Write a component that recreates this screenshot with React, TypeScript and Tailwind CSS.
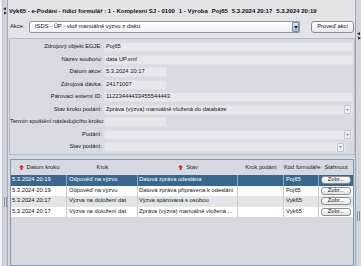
import React from "react";

type Field = {
  label: string;
  value: string;
  kind: "wide" | "narrow" | "combo" | "comboShort";
};

const fields: Field[] = [
  { label: "Zdrojový objekt EGJE:", value: "Poj65", kind: "wide" },
  { label: "Název souboru:", value: "data UP.xml", kind: "wide" },
  { label: "Datum akce:", value: "5.3.2024 20:17", kind: "narrow" },
  { label: "Zdrojová dávka:", value: "24171007", kind: "narrow" },
  { label: "Párovací externí ID:", value: "11223444433455544443", kind: "wide" },
  { label: "Stav kroku podání:", value: "Zpráva (výzva) manuálně vložená do databáze", kind: "combo" },
  { label: "Termín spuštění následujícího kroku:", value: "", kind: "narrow" },
  { label: "Podání:", value: "", kind: "combo" },
  { label: "Stav podání:", value: "", kind: "comboShort" },
];

const rows = [
  { date: "5.3.2024 20:19", krok: "Odpověď na výzvu", stav: "Datová zpráva odeslána", kod: "Poj65" },
  { date: "5.3.2024 20:19", krok: "Odpověď na výzvu", stav: "Datová zpráva připravena k odeslání", kod: "Poj65" },
  { date: "5.3.2024 20:17", krok: "Výzva na doložení dat", stav: "Výzva spárovaná s osobou", kod: "Vyk65" },
  { date: "5.3.2024 20:17", krok: "Výzva na doložení dat", stav: "Zpráva (výzva) manuálně vložená ...", kod: "Vyk65" },
];

function SplitArrows() {
  return (
    <svg width="4" height="8" viewBox="0 0 4 8">
      <polygon points="3,0 0,1.7 3,3.4" fill="#333" />
      <polygon points="1,4.4 4,6.1 1,7.8" fill="#333" />
    </svg>
  );
}

function Grip() {
  return (
    <svg width="3" height="10" viewBox="0 0 3 10">
      <rect x="0" y="0" width="1" height="10" fill="#8d949e" />
      <rect x="2" y="0" width="1" height="10" fill="#8d949e" />
    </svg>
  );
}

function SortArrow() {
  return (
    <svg width="5" height="5" viewBox="0 0 5 5" className="mr-[3px]">
      <polygon points="2.5,0 5,2.6 0,2.6" fill="#e01010" />
      <rect x="1.6" y="2.5" width="1.8" height="2.5" fill="#e01010" />
    </svg>
  );
}

function ComboArrow() {
  return (
    <div className="w-[7px] h-[9px] mr-[1px] rounded-[1px] border border-[#c3c8d0] bg-[#eceef1] flex items-center justify-center">
      <svg width="3" height="2" viewBox="0 0 3 2">
        <polygon points="0,0 3,0 1.5,2" fill="#8a9099" />
      </svg>
    </div>
  );
}

function FormRow({ f }: { f: Field }) {
  const width =
    f.kind === "narrow" ? "w-[63px]" : f.kind === "comboShort" ? "w-[242px]" : "w-[249px]";
  const isCombo = f.kind === "combo" || f.kind === "comboShort";
  return (
    <div className="h-[12.5px] flex items-center">
      <div className="w-[92px] text-right whitespace-nowrap">{f.label}</div>
      <div
        className={`${width} ml-[2px] h-[10px] bg-[#e6e8ec] border border-[#dde0e5] flex items-center justify-between`}
      >
        <span className="pl-[1px] whitespace-nowrap">{f.value}</span>
        {isCombo && <ComboArrow />}
      </div>
    </div>
  );
}

export default function App() {
  return (
    <div className="w-[361px] h-[266px] overflow-hidden flex bg-[#d6dae0] font-['Liberation_Sans',Arial,sans-serif] text-[5.8px] leading-none text-[#151515]">
      {/* left neighbour pane edge */}
      <div className="w-[3px] bg-[#f4f5f7] border-r border-[#b7c2d0]" />
      {/* left divider */}
      <div className="w-[5px] bg-[#d2d6dc] border-r border-[#a4aab3] flex flex-col items-center pt-[7px]">
        <SplitArrows />
        <div className="mt-[182px]">
          <Grip />
        </div>
      </div>

      {/* main */}
      <div className="w-[347px] flex flex-col">
        <div className="h-[17px] bg-[#e3e4e7] pt-[4px] pl-[1px] flex items-center gap-[4px] font-bold text-[6px] whitespace-nowrap text-[#111]">
          <span>Vyk65 - e-Podání - řídicí formulář : 1 - Komplexní SJ - 0100</span>
          <span>1 - Výroba</span>
          <span>Poj65</span>
          <span>5.3.2024 20:17</span>
          <span>5.3.2024 20:19</span>
        </div>

        <div className="h-[21px] bg-[#e3e4e7] flex items-center pl-[2px] pb-[1px]">
          <div className="w-[19px]">Akce:</div>
          <div className="w-[271px] h-[12px] rounded-[2px] border border-[#8d98a8] bg-gradient-to-b from-white to-[#edf0f4] flex items-center justify-between">
            <span className="pl-[5px] whitespace-nowrap">ISDS - ÚP - vlož manuálně výzvu z disku</span>
            <div className="w-[7px] h-[10px] mr-[0px] rounded-[1px] border border-[#7e8ea4] bg-gradient-to-b from-[#dbe4ef] to-[#a9bbd1] flex items-center justify-center">
              <svg width="4" height="3" viewBox="0 0 4 3">
                <polygon points="0,0 4,0 2,3" fill="#1f2a38" />
              </svg>
            </div>
          </div>
          <button className="ml-[11px] w-[43px] h-[12px] rounded-[3px] border border-[#8a9099] bg-gradient-to-b from-white to-[#e6e7ea] text-[5.8px] leading-none text-[#151515] flex items-center justify-center">
            Proveď akci
          </button>
        </div>

        {/* form panel */}
        <div className="ml-[1px] h-[117px] border border-[#b5bbc5] bg-[#d8dce2] pt-[2px]">
          {fields.map((f) => (
            <FormRow key={f.label} f={f} />
          ))}
        </div>

        {/* table */}
        <div className="ml-[2px] mt-[4px] w-[344px] flex-1 border border-[#7f98b4] bg-[#d6dae0] flex flex-col">
          <div className="h-[15px] flex items-center pt-[1px] text-[#222] whitespace-nowrap">
            <div className="w-[56px] flex items-center justify-center">
              <SortArrow />
              Datum kroku
            </div>
            <div className="w-[71px] text-center">Krok</div>
            <div className="w-[100px] flex items-center justify-center">
              <SortArrow />
              Stav
            </div>
            <div className="w-[46px] text-center">Krok podání</div>
            <div className="w-[35px] text-center">Kód formuláře</div>
            <div className="w-[34px] text-center">Stáhnout</div>
          </div>
          {rows.map((r, i) => {
            const rowCls =
              i === 0
                ? "bg-[#386890] text-white"
                : i === 2
                ? "bg-[#e2e5e9] text-[#151515]"
                : "bg-white text-[#151515]";
            const line = i === 0 ? "border-[#8fa9c0]" : "border-[#c9ced5]";
            return (
              <div key={i} className={`h-[10.5px] flex items-stretch whitespace-nowrap ${rowCls}`}>
                <div className={`w-[56px] pl-[1px] flex items-center border-r ${line}`}>{r.date}</div>
                <div className={`w-[71px] pl-[2px] flex items-center border-r ${line}`}>{r.krok}</div>
                <div className={`w-[100px] pl-[1px] flex items-center overflow-hidden border-r ${line}`}>{r.stav}</div>
                <div className={`w-[46px] border-r ${line}`} />
                <div className={`w-[35px] pl-[2px] flex items-center border-r ${line}`}>{r.kod}</div>
                <div className="w-[34px] flex items-center justify-center">
                  <div className="w-[30px] h-[8px] rounded-[3px] border border-[#8c8f94] bg-gradient-to-b from-white to-[#e2e3e6] text-[#151515] flex items-center justify-center">
                    Zobr...
                  </div>
                </div>
              </div>
            );
          })}
        </div>
      </div>

      {/* right divider */}
      <div className="w-[6px] bg-[#d2d6dc] border-l border-[#9ea5af] flex flex-col items-center pt-[32px]">
        <SplitArrows />
        <div className="mt-[171px]">
          <Grip />
        </div>
      </div>
    </div>
  );
}
